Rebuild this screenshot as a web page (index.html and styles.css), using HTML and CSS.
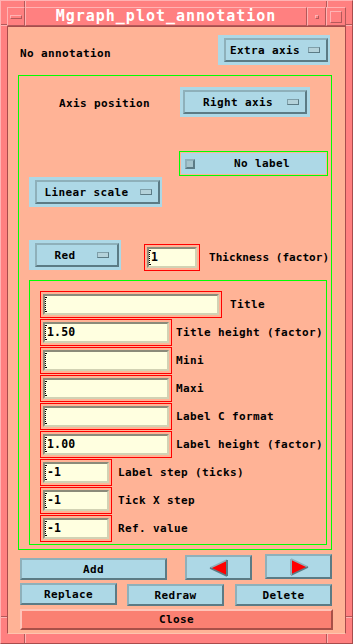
FILE: index.html
```html
<!DOCTYPE html>
<html>
<head>
<meta charset="utf-8">
<link rel="stylesheet" href="styles.css">
</head>
<body>
<div class="window">
  <div class="titlebar">
    <div class="tb-btn tb-menu"><span class="menu-bar"></span></div>
    <div class="tb-btn tb-title">Mgraph_plot_annotation</div>
    <div class="tb-btn tb-min"><span class="min-dot"></span></div>
    <div class="tb-btn tb-max"><span class="max-box"></span></div>
  </div>
  <div class="client">
    <div class="row-top">
      <span class="lbl lbl-noann">No annotation</span>
      <div class="option opt-extra"><div class="optbtn"><span class="optlbl">Extra axis</span><span class="ind"></span></div></div>
    </div>
    <div class="gframe">
      <div class="sec-axis">
        <span class="lbl lbl-axis">Axis position</span>
        <div class="option opt-right"><div class="optbtn"><span class="optlbl">Right axis</span><span class="ind"></span></div></div>
      </div>
      <div class="sec-nolabel">
        <div class="toggle-frame"><div class="toggle"><span class="tind"></span><span class="tlbl">No label</span></div></div>
      </div>
      <div class="option opt-linear"><div class="optbtn"><span class="optlbl">Linear scale</span><span class="ind"></span></div></div>
      <div class="sec-color">
        <div class="option opt-red"><div class="optbtn"><span class="optlbl">Red</span><span class="ind"></span></div></div>
        <div class="rbox rb-thick"><div class="field"><span class="caret"></span>1</div></div>
        <span class="lbl lbl-thick">Thickness (factor)</span>
      </div>
      <div class="gframe2">
        <div class="frow"><div class="rbox rb-wide"><div class="field"><span class="caret"></span></div></div><span class="lbl fl-wide">Title</span></div>
        <div class="frow"><div class="rbox rb-med"><div class="field"><span class="caret"></span>1.50</div></div><span class="lbl fl-med">Title height (factor)</span></div>
        <div class="frow"><div class="rbox rb-med"><div class="field"><span class="caret"></span></div></div><span class="lbl fl-med">Mini</span></div>
        <div class="frow"><div class="rbox rb-med"><div class="field"><span class="caret"></span></div></div><span class="lbl fl-med">Maxi</span></div>
        <div class="frow"><div class="rbox rb-med"><div class="field"><span class="caret"></span></div></div><span class="lbl fl-med">Label C format</span></div>
        <div class="frow"><div class="rbox rb-med"><div class="field"><span class="caret"></span>1.00</div></div><span class="lbl fl-med">Label height (factor)</span></div>
        <div class="frow"><div class="rbox rb-short"><div class="field"><span class="caret"></span>-1</div></div><span class="lbl fl-short">Label step (ticks)</span></div>
        <div class="frow"><div class="rbox rb-short"><div class="field"><span class="caret"></span>-1</div></div><span class="lbl fl-short">Tick X step</span></div>
        <div class="frow"><div class="rbox rb-short"><div class="field"><span class="caret"></span>-1</div></div><span class="lbl fl-short">Ref. value</span></div>
      </div>
    </div>
    <div class="btnrow1">
      <div class="pbtn b-add">Add</div>
      <div class="pbtn b-left"><svg width="20" height="18" viewBox="0 0 20 18"><polygon points="1,9 18,1 18,17" fill="#ff0000"/><line x1="1" y1="9" x2="18" y2="1" stroke="#8eb0ba" stroke-width="1.5"/><line x1="1" y1="9" x2="18" y2="17" stroke="#5b7b85" stroke-width="1.5"/><line x1="18" y1="1" x2="18" y2="17" stroke="#5b7b85" stroke-width="2"/></svg></div>
      <div class="pbtn b-right"><svg width="20" height="18" viewBox="0 0 20 18"><polygon points="2,1 19,9 2,17" fill="#ff0000"/><line x1="2" y1="1" x2="19" y2="9" stroke="#8eb0ba" stroke-width="1.5"/><line x1="2" y1="17" x2="19" y2="9" stroke="#5b7b85" stroke-width="1.5"/><line x1="2" y1="1" x2="2" y2="17" stroke="#8eb0ba" stroke-width="2"/></svg></div>
    </div>
    <div class="btnrow2">
      <div class="pbtn b-replace">Replace</div>
      <div class="pbtn b-redraw">Redraw</div>
      <div class="pbtn b-delete">Delete</div>
    </div>
    <div class="cbtn">Close</div>
  </div>
</div>
</body>
</html>
```

FILE: styles.css
```css
html, body {
  margin: 0;
  padding: 0;
  background: #ff8080;
}
body {
  font-family: "DejaVu Sans Mono", monospace;
  font-weight: bold;
  font-size: 11px;
  letter-spacing: 0.38px;
  color: #000;
}
.window {
  width: 353px;
  height: 644px;
  box-sizing: border-box;
  border: 1px solid;
  border-color: #ffb3b3 #a84c4c #a84c4c #ffb3b3;
  padding: 6px 6px 9px 6px;
  display: flex;
  flex-direction: column;
  background-color: #ff8080;
  background-origin: border-box;
  background-repeat: no-repeat;
  background-image:
    linear-gradient(#b35959,#b35959), linear-gradient(#ffb3b3,#ffb3b3),
    linear-gradient(#b35959,#b35959), linear-gradient(#ffb3b3,#ffb3b3),
    linear-gradient(#b35959,#b35959), linear-gradient(#ffb3b3,#ffb3b3),
    linear-gradient(#b35959,#b35959), linear-gradient(#ffb3b3,#ffb3b3),
    linear-gradient(#b35959,#b35959), linear-gradient(#ffb3b3,#ffb3b3),
    linear-gradient(#b35959,#b35959), linear-gradient(#ffb3b3,#ffb3b3),
    linear-gradient(#b35959,#b35959), linear-gradient(#ffb3b3,#ffb3b3),
    linear-gradient(#b35959,#b35959), linear-gradient(#ffb3b3,#ffb3b3);
  background-position:
    24px 0, 25px 0,
    326px 0, 327px 0,
    0 24px, 0 25px,
    346px 24px, 346px 25px,
    24px 634px, 25px 634px,
    326px 634px, 327px 634px,
    0 616px, 0 617px,
    346px 616px, 346px 617px;
  background-size:
    1px 7px, 1px 7px,
    1px 7px, 1px 7px,
    7px 1px, 7px 1px,
    7px 1px, 7px 1px,
    1px 10px, 1px 10px,
    1px 10px, 1px 10px,
    7px 1px, 7px 1px,
    7px 1px, 7px 1px;
}
.titlebar {
  display: flex;
  height: 19px;
  flex: none;
}
.tb-btn {
  box-sizing: border-box;
  height: 19px;
  border: 1px solid;
  border-color: #ffb3b3 #b35959 #b35959 #ffb3b3;
  background: #ff8080;
  display: flex;
  align-items: center;
  justify-content: center;
}
.tb-menu { width: 18px; }
.tb-title {
  width: 282px;
  color: #fff;
  font-size: 15px;
  letter-spacing: 1px;
  line-height: 17px;
}
.tb-min { width: 19px; }
.tb-max { width: 20px; }
.menu-bar {
  width: 12px;
  height: 4px;
  box-sizing: border-box;
  border: 1px solid;
  border-color: #ffb3b3 #b35959 #b35959 #ffb3b3;
}
.min-dot {
  width: 4px;
  height: 4px;
  box-sizing: border-box;
  border: 1px solid;
  border-color: #ffb3b3 #b35959 #b35959 #ffb3b3;
}
.max-box {
  width: 12px;
  height: 12px;
  box-sizing: border-box;
  border: 1px solid;
  border-color: #ffb3b3 #b35959 #b35959 #ffb3b3;
}
.client {
  flex: 1;
  background: #ffb396;
  border: 1px solid;
  border-color: #a84c4c #a84c4c #ffc4ae #a84c4c;
  display: flex;
  flex-direction: column;
  align-items: flex-start;
}
.lbl {
  line-height: 13px;
  white-space: nowrap;
}
.row-top {
  display: flex;
  align-items: flex-start;
  align-self: stretch;
  height: 30px;
  padding-top: 8px;
}
.lbl-noann { margin-left: 12px; margin-top: 12px; }
.option {
  display: flex;
  box-sizing: border-box;
  background: #add8e6;
  height: 30px;
  padding: 3px 2px 3px 6px;
}
.optbtn {
  flex: 1;
  display: flex;
  align-items: center;
  box-sizing: border-box;
  border: 2px solid;
  border-color: #8eb0ba #5b7b85 #5b7b85 #8eb0ba;
  background: #add8e6;
}
.optlbl {
  flex: 1;
  text-align: center;
  line-height: 13px;
  white-space: nowrap;
}
.ind {
  width: 12px;
  height: 6px;
  box-sizing: border-box;
  border: 1px solid;
  border-color: #7f9fa9 #5b7b85 #5b7b85 #7f9fa9;
  background: #b4d2da;
  margin-right: 6px;
  margin-left: 4px;
}
.opt-extra { width: 112px; margin-left: auto; margin-right: 15px; }
.gframe {
  box-sizing: border-box;
  width: 314px;
  height: 475px;
  margin-top: 10px;
  margin-left: 10px;
  border: 1px solid #00ff00;
  display: flex;
  flex-direction: column;
  align-items: flex-start;
}
.sec-axis {
  display: flex;
  align-items: flex-start;
  align-self: stretch;
  height: 30px;
  margin-top: 11px;
}
.lbl-axis { margin-left: 40px; margin-top: 10px; }
.opt-right { width: 130px; margin-left: auto; margin-right: 21px; padding: 3px 3px 3px 3px; }
.opt-right .optlbl { padding-left: 8px; }
.sec-nolabel {
  display: flex;
  justify-content: flex-end;
  align-self: stretch;
  margin-top: 34px;
}
.toggle-frame {
  box-sizing: border-box;
  width: 149px;
  height: 25px;
  border: 1px solid #00ff00;
  padding: 1px;
  margin-right: 3px;
}
.toggle {
  height: 100%;
  background: #add8e6;
  display: flex;
  align-items: center;
}
.tind {
  width: 10px;
  height: 10px;
  box-sizing: border-box;
  border: 2px solid;
  border-color: #8eb0ba #5b7b85 #5b7b85 #8eb0ba;
  background: #a4c4cc;
  margin-left: 4px;
}
.tlbl { margin-left: 39px; line-height: 13px; }
.opt-linear { width: 133px; margin-top: 1px; margin-left: 10px; }
.sec-color {
  display: flex;
  align-items: flex-start;
  align-self: stretch;
  margin-top: 33px;
  margin-left: 10px;
}
.opt-red { width: 92px; padding-right: 2px; }
.opt-red .ind { margin-right: 8px; }
.rbox {
  box-sizing: border-box;
  height: 27px;
  border: 1px solid #ff0000;
  padding: 2px;
  display: flex;
  flex: none;
}
.rb-thick { width: 56px; margin-left: 23px; margin-top: 4px; }
.lbl-thick {
  margin-left: 9px;
  margin-top: 11px;
  letter-spacing: 0.05px;
  flex: none;
}
.field {
  flex: 1;
  box-sizing: border-box;
  height: 21px;
  border: 2px solid;
  border-color: #8b8b7a #d2d2b4 #d2d2b4 #8b8b7a;
  background: #ffffe0;
  display: flex;
  align-items: center;
  line-height: 13px;
  font-size: 11.5px;
  letter-spacing: 0.2px;
}
.caret {
  width: 2px;
  height: 15px;
  background:
    linear-gradient(#000,#000) 0 0 / 2px 1px no-repeat,
    linear-gradient(#000,#000) 0 100% / 2px 1px no-repeat,
    repeating-linear-gradient(#000 0 1px, transparent 1px 2px) 0 0 / 1px 100% no-repeat;
}
.gframe2 {
  box-sizing: border-box;
  width: 298px;
  height: 265px;
  margin-top: 9px;
  margin-left: 10px;
  border: 1px solid #00ff00;
  padding: 10px 0 0 10px;
  display: flex;
  flex-direction: column;
}
.frow {
  display: flex;
  align-items: center;
  height: 27px;
  margin-bottom: 1px;
}
.rb-wide { width: 182px; }
.rb-med { width: 132px; }
.rb-short { width: 72px; }
.fl-wide { margin-left: 8px; }
.fl-med { margin-left: 4px; }
.fl-short { margin-left: 6px; }
.pbtn {
  box-sizing: border-box;
  background: #add8e6;
  border: 2px solid;
  border-color: #8eb0ba #5b7b85 #5b7b85 #8eb0ba;
  display: flex;
  align-items: center;
  justify-content: center;
  line-height: 13px;
  height: 22px;
}
.btnrow1 {
  display: flex;
  align-items: flex-start;
  height: 26px;
  margin-top: 4px;
  padding-left: 12px;
}
.b-add { width: 147px; margin-top: 4px; }
.b-left { width: 67px; height: 25px; margin-left: 18px; margin-top: 1px; }
.b-right { width: 67px; height: 25px; margin-left: 13px; }
.btnrow2 {
  display: flex;
  align-items: flex-start;
  height: 23px;
  margin-top: 3px;
  padding-left: 12px;
}
.b-replace { width: 97px; }
.b-redraw { width: 97px; margin-left: 10px; margin-top: 1px; }
.b-delete { width: 97px; margin-left: 11px; margin-top: 1px; }
.cbtn {
  box-sizing: border-box;
  width: 313px;
  height: 21px;
  margin-top: 3px;
  margin-left: 12px;
  background: #fa8072;
  border: 2px solid;
  border-color: #ffc4b8 #a85048 #a85048 #ffc4b8;
  display: flex;
  align-items: center;
  justify-content: center;
  line-height: 13px;
}
```
